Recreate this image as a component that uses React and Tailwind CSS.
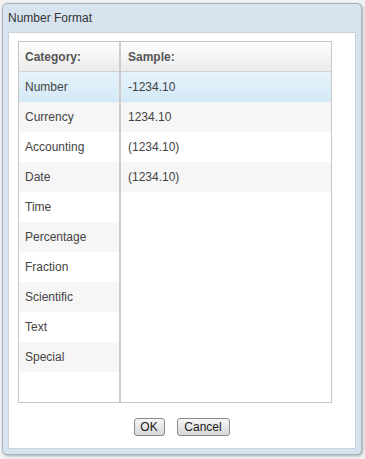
import React from "react";

const categories = [
  "Number",
  "Currency",
  "Accounting",
  "Date",
  "Time",
  "Percentage",
  "Fraction",
  "Scientific",
  "Text",
  "Special",
];

const samples = ["-1234.10", "1234.10", "(1234.10)", "(1234.10)"];

/* row background: first is selected, then alternating */
const rowBg = (i) => {
  if (i === 0) return "bg-gradient-to-b from-[#e5f3fb] to-[#d3e9f7]";
  return i % 2 === 1 ? "bg-[#f6f6f6]" : "bg-white";
};

function HeaderCell({ children, pad }) {
  return (
    <div
      className={`h-[30px] flex items-center ${pad} font-bold text-[#555] border-b border-[#d2d2d2] bg-gradient-to-b from-[#fefefe] to-[#ebebeb]`}
    >
      {children}
    </div>
  );
}

export default function App() {
  return (
    <div
      className="w-[365px] h-[459px] bg-[#f1f2f3] pt-[3px] pl-[2px] text-[12px] text-[#444]"
      style={{ fontFamily: '"Liberation Sans", Arial, sans-serif' }}
    >
      {/* DIALOG */}
      <div className="w-[360px] h-[452px] flex flex-col border border-[#a8b2bc] rounded-[5px] bg-[#d7e3ee] shadow-[1px_1px_3px_rgba(0,0,0,0.3)]">

        {/* TITLE */}
        <div className="h-[28px] flex items-center pl-[5px] text-[#333]">
          Number Format
        </div>

        {/* BODY */}
        <div className="mx-[5px] h-[417px] bg-white border border-[#c9d3dc] pt-[8px] pl-[9px] flex flex-col">

          {/* TABLE */}
          <div className="w-[314px] h-[362px] border border-[#c6c6c6] flex">

            {/* CATEGORY */}
            <div className="w-[102px] border-r-2 border-[#cccccc] flex flex-col">
              <HeaderCell pad="pl-[6px]">Category:</HeaderCell>
              {categories.map((c, i) => (
                <div
                  key={c}
                  className={`h-[30px] flex items-center pl-[6px] ${rowBg(i)}`}
                >
                  {c}
                </div>
              ))}
            </div>

            {/* SAMPLE */}
            <div className="flex-1 flex flex-col">
              <HeaderCell pad="pl-[7px]">Sample:</HeaderCell>
              {samples.map((s, i) => (
                <div
                  key={i}
                  className={`h-[30px] flex items-center pl-[7px] ${rowBg(i)}`}
                >
                  {s}
                </div>
              ))}
            </div>

          </div>

          {/* BUTTONS */}
          <div className="mt-[15px] flex justify-center gap-[12px] pr-[10px]">
            <button className="w-[31px] h-[18px] flex items-center justify-center border border-[#8a8a8a] rounded-[3px] bg-gradient-to-b from-[#f7f7f7] to-[#d6d6d6] text-[#1a1a1a] text-[12px]">
              OK
            </button>
            <button className="w-[53px] h-[18px] flex items-center justify-center border border-[#8a8a8a] rounded-[3px] bg-gradient-to-b from-[#f7f7f7] to-[#d6d6d6] text-[#1a1a1a] text-[12px]">
              Cancel
            </button>
          </div>

        </div>
      </div>
    </div>
  );
}
